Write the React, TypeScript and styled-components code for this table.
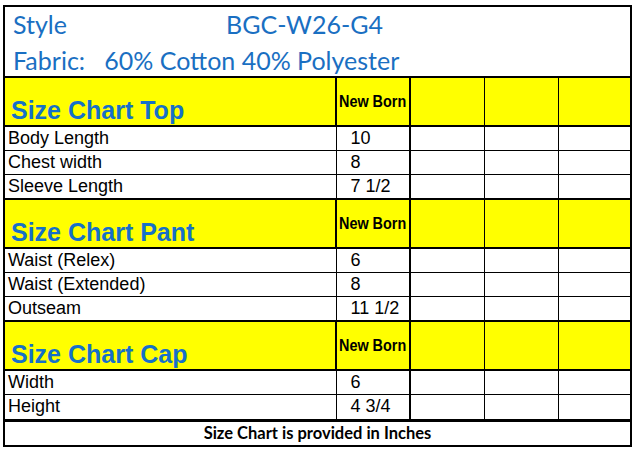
import { Fragment } from "react";
import styled, { createGlobalStyle } from "styled-components";

interface Section {
  title: string;
  rows: [string, string][];
}

const sections: Section[] = [
  {
    title: "Size Chart Top",
    rows: [
      ["Body Length", "10"],
      ["Chest width", "8"],
      ["Sleeve Length", "7 1/2"],
    ],
  },
  {
    title: "Size Chart Pant",
    rows: [
      ["Waist (Relex)", "6"],
      ["Waist (Extended)", "8"],
      ["Outseam", "11 1/2"],
    ],
  },
  {
    title: "Size Chart Cap",
    rows: [
      ["Width", "6"],
      ["Height", "4 3/4"],
    ],
  },
];

// three empty size columns after "New Born"
const blankCols = [0, 1, 2];

const App = () => {
  return (
    <>
      <GlobalStyle />
      <Sheet>
        <TitleBlock>
          <TitleLine>
            <StyleLabel>Style</StyleLabel>
            <span>BGC-W26-G4</span>
          </TitleLine>
          <TitleLine>Fabric:&nbsp;&nbsp; 60% Cotton 40% Polyester</TitleLine>
        </TitleBlock>
        <Table>
          <colgroup>
            <col style={{ width: 331 }} />
            <col style={{ width: 74 }} />
            <col style={{ width: 74 }} />
            <col style={{ width: 74 }} />
            <col />
          </colgroup>
          <tbody>
            {sections.map((section) => (
              <Fragment key={section.title}>
                <HeadRow>
                  <SectionTitle>{section.title}</SectionTitle>
                  <SizeHead>
                    <Narrow>New Born</Narrow>
                  </SizeHead>
                  {blankCols.map((i) => (
                    <HeadBlank key={i} />
                  ))}
                </HeadRow>
                {section.rows.map(([label, value]) => (
                  <DataRow key={label}>
                    <LabelCell>{label}</LabelCell>
                    <ValueCell>{value}</ValueCell>
                    {blankCols.map((i) => (
                      <BlankCell key={i} />
                    ))}
                  </DataRow>
                ))}
              </Fragment>
            ))}
          </tbody>
        </Table>
        <Footer>Size Chart is provided in Inches</Footer>
      </Sheet>
    </>
  );
};

export default App;

const GlobalStyle = createGlobalStyle`
  body {
    margin: 0;
    background: #ffffff;
    font-family: "Liberation Sans", Arial, sans-serif;
  }
`;

const Sheet = styled.div`
  margin: 5px 0 0 3px;
  width: 629px;
  box-sizing: border-box;
  border: 2px solid #000;
`;

const TitleBlock = styled.div`
  height: 71px;
  box-sizing: border-box;
  padding: 0 0 0 8px;
  font-family: Lato, "Open Sans", sans-serif;
  font-size: 25px;
  color: #1a6fc2;
  display: flex;
  flex-direction: column;
  gap: 2px;
`;

const TitleLine = styled.div`
  display: flex;
  height: 34px;
  align-items: center;
  white-space: pre;
`;

const StyleLabel = styled.span`
  width: 213px;
`;

const Table = styled.table`
  width: 100%;
  border-collapse: collapse;
  table-layout: fixed;
  margin-top: -2px;
`;

const HeadRow = styled.tr`
  height: 49px;
  background: #ffff00;
`;

const SectionTitle = styled.td`
  border: 2px solid #000;
  border-left: none;
  padding: 0 0 0 6px;
  vertical-align: bottom;
  font-weight: bold;
  font-size: 25px;
  color: #1670c8;
  line-height: 29px;
`;

const SizeHead = styled.td`
  border: 2px solid #000;
  padding: 0 0 0 2px;
  color: #000;
  white-space: nowrap;
  vertical-align: middle;
`;

/* condensed bold label, like Arial Narrow */
const Narrow = styled.span`
  display: inline-block;
  font-weight: bold;
  font-size: 16px;
  transform: scaleX(0.9);
  transform-origin: left center;
`;

const HeadBlank = styled.td`
  border: 2px solid #000;
  border-left-width: 1px;
  border-right-width: 1px;
  &:last-child {
    border-right: none;
  }
`;

const DataRow = styled.tr`
  height: 24.4px;
`;

const LabelCell = styled.td`
  border-bottom: 1px solid #000;
  border-right: 1px solid #000;
  padding: 0 0 0 3px;
  font-size: 18px;
  color: #000;
  line-height: 21px;
`;

const ValueCell = styled.td`
  border-bottom: 1px solid #000;
  border-right: 2px solid #000;
  padding: 0 0 0 14px;
  font-size: 18px;
  color: #000;
  line-height: 21px;
`;

const BlankCell = styled.td`
  border-bottom: 1px solid #000;
  border-right: 1px solid #000;
  &:last-child {
    border-right: none;
  }
`;

const Footer = styled.div`
  height: 23px;
  border-top: 2px solid #000;
  display: flex;
  align-items: center;
  justify-content: center;
  font-family: Lato, "Open Sans", sans-serif;
  font-weight: bold;
  font-size: 16.5px;
  color: #000;
`;
